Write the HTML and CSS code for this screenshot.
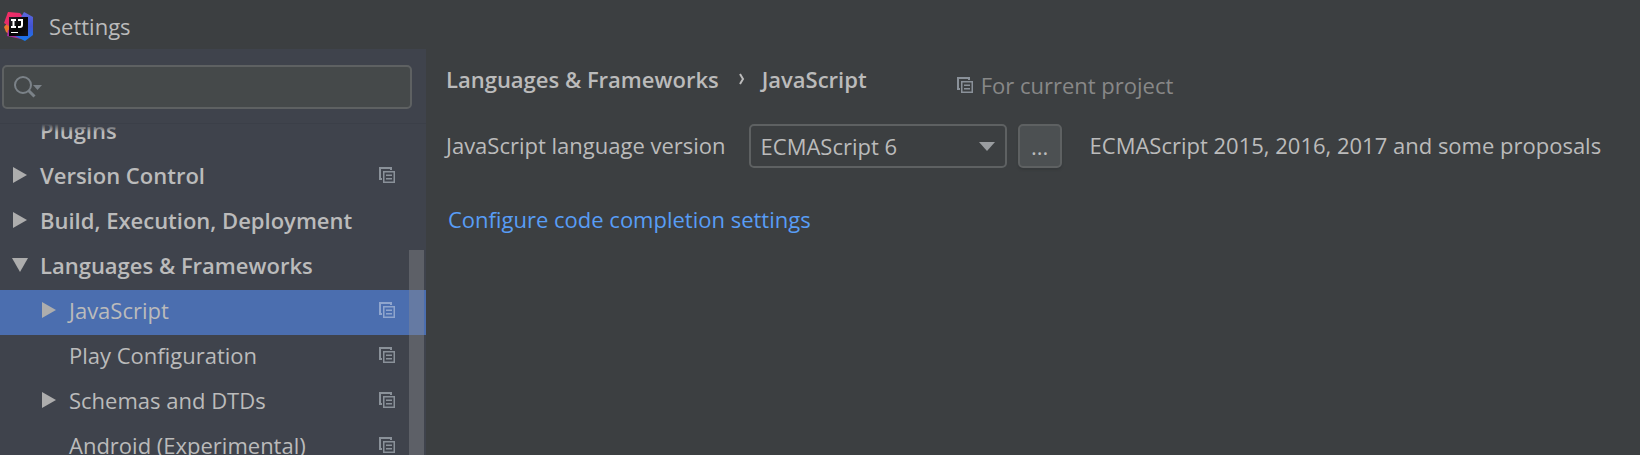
FILE: index.html
```html
<!DOCTYPE html>
<html lang="en">
<head>
<meta charset="utf-8">
<title>Settings</title>
<link rel="stylesheet" href="styles.css">
</head>
<body>
<svg class="defs" aria-hidden="true">
  <symbol id="copy" viewBox="0 0 16 16">
    <path fill="currentColor" d="M0 0h13v3h-2v-1h-9v9h1v2h-3z"/>
    <path fill="currentColor" fill-rule="evenodd" d="M4 4h12v12h-12zM5.500 5.500v9h9v-9zM7 7.500h6v1.500h-6zM7 11h6v1.500h-6z"/>
  </symbol>
  <symbol id="right" viewBox="0 0 16 16"><path fill="currentColor" d="M1 0v16l14-8z"/></symbol>
  <symbol id="down" viewBox="0 0 16 16"><path fill="currentColor" d="M0 1h16l-8 14z"/></symbol>
</svg>
<header class="titlebar">
  <svg class="logo" viewBox="0 0 30 30" aria-hidden="true">
    <defs>
      <linearGradient id="blue" x1="0" y1="0" x2="0" y2="1"><stop offset="0" stop-color="#5b68dd"/><stop offset=".5" stop-color="#4253d2"/><stop offset="1" stop-color="#147af0"/></linearGradient>
      <linearGradient id="red" x1="0" y1="0" x2="1" y2="1"><stop offset="0" stop-color="#fb2e60"/><stop offset="1" stop-color="#c72b7c"/></linearGradient>
      <linearGradient id="black" x1="0" y1="0" x2="1" y2="1"><stop offset="0" stop-color="#25212b"/><stop offset=".5" stop-color="#030303"/><stop offset="1" stop-color="#17151b"/></linearGradient>
    </defs>
    <path fill="#e9752c" d="M0 16l5-6v13l-3-2z"/>
    <path fill="#a82e9c" d="M4 19l6-1 7 10-14-3z"/>
    <path fill="url(#red)" d="M4 1l12 1 4 5-12 10-8-5z"/>
    <path fill="url(#blue)" d="M20 1l9 5v18l-8 6-10-5 5-17z"/>
    <path fill="url(#black)" d="M5 6h19v19H5z"/>
    <path fill="none" stroke="#fff" stroke-width="2" d="M7 9h5M9.500 9v7M7 16h5M14 9h4v5q0 2-2 2h-2"/>
    <path fill="none" stroke="#fff" stroke-width="1" d="M7 21.500h7"/>
  </svg>
  <h1 class="title">Settings</h1>
</header>
<div class="window">
  <aside class="sidebar">
    <div class="search">
      <svg class="search-icon" viewBox="0 0 30 24" aria-hidden="true"><g fill="none" stroke="currentColor"><circle cx="10" cy="10" r="8" stroke-width="2"/><path d="M15.500 15.500l6 6" stroke-width="3"/></g><path fill="currentColor" d="M20 10h9l-4.500 5z"/></svg>
      <input class="search-input" type="text" aria-label="Search settings">
    </div>
    <nav class="tree" aria-label="Settings categories">
      <ul class="rows">
        <li class="row group"><span class="arrow"></span><span class="label">Plugins</span></li>
        <li class="row group"><button class="arrow" aria-label="Expand Version Control"><svg><use href="#right"/></svg></button><span class="label">Version Control</span><svg class="copy"><use href="#copy"/></svg></li>
        <li class="row group"><button class="arrow" aria-label="Expand Build, Execution, Deployment"><svg><use href="#right"/></svg></button><span class="label">Build, Execution, Deployment</span></li>
        <li class="row group"><button class="arrow" aria-label="Collapse Languages &amp; Frameworks"><svg><use href="#down"/></svg></button><span class="label">Languages &amp; Frameworks</span></li>
        <li class="row child selected"><button class="arrow" aria-label="Expand JavaScript"><svg><use href="#right"/></svg></button><span class="label">JavaScript</span><svg class="copy"><use href="#copy"/></svg></li>
        <li class="row child"><span class="arrow"></span><span class="label">Play Configuration</span><svg class="copy"><use href="#copy"/></svg></li>
        <li class="row child"><button class="arrow" aria-label="Expand Schemas and DTDs"><svg><use href="#right"/></svg></button><span class="label">Schemas and DTDs</span><svg class="copy"><use href="#copy"/></svg></li>
        <li class="row child"><span class="arrow"></span><span class="label">Android (Experimental)</span><svg class="copy"><use href="#copy"/></svg></li>
      </ul>
      <div class="thumb"></div>
    </nav>
  </aside>
  <main class="content">
    <div class="heading">
      <h2 class="crumbs"><span>Languages &amp; Frameworks</span><svg class="chevron" viewBox="0 0 6 12" aria-hidden="true"><path d="M1 1l3 5-3 5" fill="none" stroke="currentColor" stroke-width="2"/></svg><span>JavaScript</span></h2>
      <p class="scope"><svg class="copy"><use href="#copy"/></svg><span>For current project</span></p>
    </div>
    <div class="version">
      <label class="version-label" for="version">JavaScript language version</label>
      <div class="combo">
        <select id="version" class="select"><option>ECMAScript 6</option></select>
        <svg class="combo-arrow" viewBox="0 0 16 10" aria-hidden="true"><path fill="currentColor" d="M0 0h16l-8 9z"/></svg>
      </div>
      <button class="more">...</button>
      <span class="hint">ECMAScript 2015, 2016, 2017 and some proposals</span>
    </div>
    <a class="link" href="#">Configure code completion settings</a>
  </main>
</div>
</body>
</html>
```
FILE: styles.css
```css
* { box-sizing: border-box; }
body {
  margin: 0;
  height: 100vh;
  display: flex;
  flex-direction: column;
  overflow: hidden;
  background: #3c3f41;
  color: #bbbbbb;
  font: 22px/32px "Open Sans", "Noto Sans", sans-serif;
}
h1, h2, p, ul { margin: 0; padding: 0; font-size: inherit; }
button, input, select { font: inherit; color: inherit; margin: 0; }
.defs { position: absolute; width: 0; height: 0; }
.titlebar { display: flex; align-items: center; gap: 15px; height: 49px; padding: 2px 4px 0; flex: none; }
.logo { width: 30px; height: 30px; }
.title { font-weight: 400; }
.window { display: flex; flex: 1; min-height: 0; }
.sidebar { display: flex; flex-direction: column; width: 426px; flex: none; background: #3f434c; }
.search {
  display: flex;
  align-items: center;
  height: 44px;
  margin: 16px 14px 14px 2px;
  padding-left: 9px;
  border: 2px solid #5e6162;
  border-radius: 5px;
  background: #45494a;
  flex: none;
}
.search-icon { width: 30px; height: 24px; color: #7b8288; flex: none; }
.search-input { flex: 1; min-width: 0; border: 0; outline: 0; padding: 0 6px; background: transparent; }
.tree { position: relative; flex: 1; min-height: 0; overflow: hidden; }
.tree::before {
  content: "";
  position: absolute;
  inset: 0 0 auto;
  height: 8px;
  border-top: 1px solid #3b3f48;
  background: linear-gradient(#3f434c, transparent);
}
.rows { list-style: none; margin-top: -13px; }
.row { display: flex; align-items: center; height: 45px; padding: 0 31px 5px 12px; }
.child { padding-left: 41px; }
.group { font-weight: 600; }
.selected { background: #4b6eaf; }
.label { flex: 1; white-space: nowrap; }
.arrow { display: flex; width: 28px; padding: 0; border: 0; background: none; color: #adadad; flex: none; }
.arrow svg { width: 16px; height: 16px; }
.copy { width: 16px; height: 16px; color: #8a9199; flex: none; }
.selected .copy { color: #8fa5cd; }
.thumb { position: absolute; top: 127px; right: 2px; bottom: 0; width: 15px; background: rgba(140, 140, 145, .4); }
.content { flex: 1; min-width: 0; padding: 14px 20px 0; }
.heading { display: flex; gap: 90px; }
.crumbs { display: flex; align-items: center; height: 32px; font-weight: 600; }
.chevron { width: 6px; height: 12px; margin: 0 17px 0 20px; }
.scope { display: flex; align-items: center; gap: 8px; padding-top: 6px; color: #888888; }
.version { display: flex; align-items: center; margin-top: 23px; white-space: nowrap; }
.version-label, .hint { padding-bottom: 3px; }
.combo { position: relative; width: 258px; margin: 0 11px 0 23px; }
.select {
  appearance: none;
  width: 100%;
  height: 44px;
  padding: 0 40px 0 10px;
  border: 2px solid #5e6162;
  border-radius: 5px;
  background: #3c3f41;
}
.combo-arrow { position: absolute; top: 18px; right: 12px; width: 16px; height: 10px; color: #9a9da0; pointer-events: none; }
.more {
  width: 44px;
  height: 44px;
  padding: 0;
  border: 2px solid #5e6162;
  border-radius: 5px;
  background: #4c5052;
  box-shadow: 0 2px 2px #36393b;
}
.hint { margin-left: 28px; }
.link { display: inline-block; margin: 35px 0 0 2px; color: #589df6; text-decoration: none; }
```
